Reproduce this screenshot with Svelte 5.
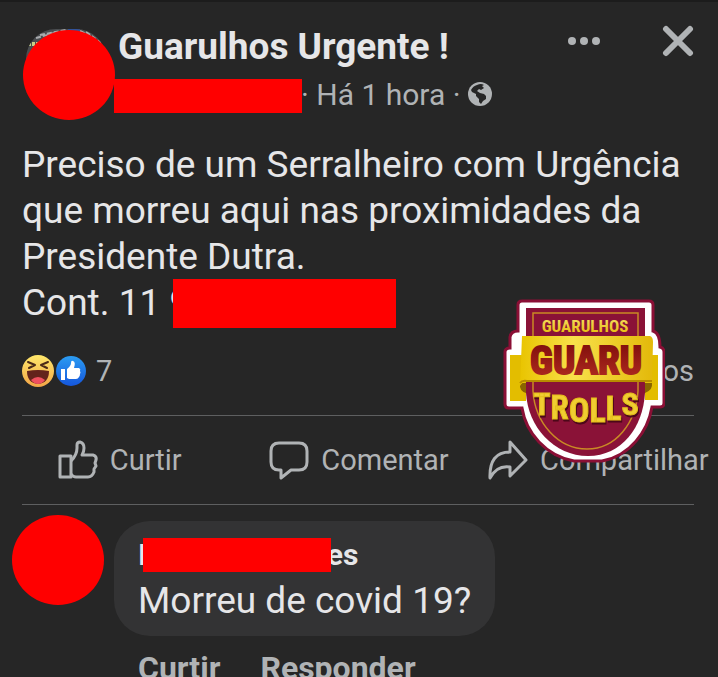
<script>
  const author = "Guarulhos Urgente !";
  const lines = [
    "Preciso de um Serralheiro com Urgência",
    "que morreu aqui nas proximidades da",
    "Presidente Dutra.",
  ];
</script>

<main class="page">
  <article class="post">
    <header class="header">
      <div class="avatar">
        <svg class="photo" width="80" height="80" viewBox="0 0 80 80" aria-hidden="true">
          <clipPath id="round"><rect width="80" height="80" rx="30" /></clipPath>
          <g clip-path="url(#round)">
            <rect width="80" height="80" fill="#4a4d50" />
            <path d="M10 9 L32 3 M14 6 L40 1 M54 2 L66 8 M60 3 L78 16" stroke="#a9abae" stroke-width="2" stroke-dasharray="5 2" />
            <path d="M2 15 H14" stroke="#c9cf86" stroke-width="4" stroke-dasharray="3 1" />
            <path d="M42 1 H54" stroke="#33539b" stroke-width="3" />
          </g>
        </svg>
        <span class="disc"></span>
      </div>
      <div class="heading">
        <h1>{author}</h1>
        <p class="meta">
          <span class="redacted meta-name"></span>
          <span>· Há 1 hora ·</span>
          <svg width="24" height="24" viewBox="0 0 24 24" role="img" aria-label="Público">
            <circle cx="12" cy="12" r="12" fill="#b0b3b5" />
            <path
              d="M9 3 Q13 1 16 3 L14 4 L16 6 L13 8 L11 7 L9 9 L12 11 L16 12 L18 14 L18 17 L15 19 L13 22 L11 20 L11 17 L8 14 L8 12 L4 10 L3 8 Q5 4 9 3 Z"
              fill="#262626"
            />
          </svg>
        </p>
      </div>
      <div class="tools">
        <button aria-label="Mais opções">
          <svg width="32" height="32" viewBox="0 0 32 32" fill="#b0b3b5">
            <circle cx="4" cy="16" r="4" />
            <circle cx="16" cy="16" r="4" />
            <circle cx="28" cy="16" r="4" />
          </svg>
        </button>
        <button aria-label="Fechar">
          <svg width="32" height="32" viewBox="0 0 32 32" stroke="#b0b3b5" stroke-width="6" stroke-linecap="round">
            <path d="M4 4 L28 28 M28 4 L4 28" />
          </svg>
        </button>
      </div>
    </header>

    <div class="body">
      {#each lines as line}
        <p>{line}</p>
      {/each}
      <p class="contact">Cont. 11 9<span class="redacted phone"></span></p>
    </div>

    <div class="counts">
      <svg width="32" height="32" viewBox="0 0 32 32" aria-hidden="true">
        <defs>
          <linearGradient id="haha" x1="0" y1="0" x2="0" y2="1">
            <stop offset="0" stop-color="#ffe86b" />
            <stop offset="1" stop-color="#f3a547" />
          </linearGradient>
        </defs>
        <circle cx="16" cy="16" r="16" fill="url(#haha)" />
        <path d="M6 7 L13 10 L7 13 M26 7 L19 10 L25 13" fill="none" stroke="#4c2b18" stroke-width="2" stroke-linecap="round" stroke-linejoin="round" />
        <path d="M5 16 Q16 14 27 16 Q27 28 16 29 Q5 28 5 16 Z" fill="#63231c" />
        <path d="M9 25 Q16 19 23 25 Q20 29 16 29 Q12 29 9 25 Z" fill="#f0505f" />
      </svg>
      <svg width="32" height="32" viewBox="0 0 32 32" aria-hidden="true">
        <defs>
          <linearGradient id="like" x1="0" y1="0" x2="0" y2="1">
            <stop offset="0" stop-color="#2b9cf2" />
            <stop offset="1" stop-color="#1556dc" />
          </linearGradient>
        </defs>
        <circle cx="15" cy="16" r="15" fill="url(#like)" />
        <path d="M5 14 H9 V25 H5 Z" fill="#fff" />
        <path d="M11 14 Q15 11 15 8 Q15 5 17 6 Q20 7 18 13 H23 Q25 14 24 16 Q25 18 24 19 Q24 21 23 22 Q22 24 20 24 H13 L11 23 Z" fill="#fff" />
      </svg>
      <span class="total">7</span>
      <span class="comments">comentários</span>
    </div>

    <nav class="actions">
      <button>
        <svg width="40" height="40" viewBox="0 0 40 40" class="outline">
          <path d="M2 16 H13 V37 H2 Z" />
          <path d="M13 21 Q19 15 19 8 V5 Q19 2 22 2 Q26 3 26 8 Q26 12 24 15 H35 Q39 16 38 20 L37 23 L38 26 L36 29 L36 32 Q34 37 30 37 H18 Q15 37 13 34" />
        </svg>
        Curtir
      </button>
      <button>
        <svg width="40" height="40" viewBox="0 0 40 40" class="outline">
          <path d="M10 3 H30 Q38 3 38 11 V22 Q38 30 30 30 H22 L12 38 V30 H10 Q2 30 2 22 V11 Q2 3 10 3 Z" />
        </svg>
        Comentar
      </button>
      <button>
        <svg width="40" height="40" viewBox="0 0 40 40" class="outline">
          <path d="M22 2 L38 20 L22 36 V27 Q9 25 2 38 Q1 12 22 12 Z" />
        </svg>
        Compartilhar
      </button>
    </nav>

    <svg class="sticker" width="162" height="166" viewBox="-1 -1 162 166" role="img" aria-label="Guarulhos Guaru Trolls">
      <defs>
        <linearGradient id="gold" x1="0" y1="0" x2="0" y2="1">
          <stop offset="0" stop-color="#f7e36a" />
          <stop offset="1" stop-color="#e5b700" />
        </linearGradient>
        <linearGradient id="ribbon" x1="0" y1="0" x2="1" y2="0">
          <stop offset="0" stop-color="#e9c400" />
          <stop offset="0.4" stop-color="#f8e04a" />
          <stop offset="1" stop-color="#e3b90a" />
        </linearGradient>
        <linearGradient id="red" x1="0" y1="0" x2="0" y2="1">
          <stop offset="0" stop-color="#7a0a0a" />
          <stop offset="1" stop-color="#b52f22" />
        </linearGradient>
      </defs>
      <path
        d="M18 2 H145 Q149 2 149 6 V32 Q156 34 156 48 Q160 49 160 53 V104 Q160 108 156 108 H148 C144 132 126 157 98 162 H70 C42 157 22 134 18 109 H5 Q1 109 1 105 V53 Q1 49 6 49 V38 Q7 32 14 32 V6 Q14 2 18 2 Z"
        fill="#fff"
        stroke="#8a0f35"
        stroke-width="3"
      />
      <path d="M22 9 H141 V94 C139 128 118 157 84 157 C50 157 24 128 22 94 Z" fill="#8a1237" />
      <path d="M29 14 H134 V92 C132 124 112 150 83 150 C54 150 31 124 29 92 Z" fill="none" stroke="#c98a25" stroke-width="1.5" />
      <path d="M6 56 H22 V102 H6 Z M141 56 H154 V101 H141 Z" fill="#e3bd00" />
      <path d="M16 84 Q15 92 22 94 V84 Z M148 84 Q149 91 141 94 V84 Z" fill="#8a6500" />
      <path d="M18 37 H146 Q149 38 149 43 L148 83 Q146 85 140 83 H22 Q18 83 16 87 Z" fill="url(#ribbon)" />
      <path d="M16 84 Q18 81 23 82 H148" fill="none" stroke="#b88b00" stroke-width="2" />
      <g class="letters">
        <text x="81" y="33" font-size="17" fill="url(#gold)">GUARULHOS</text>
        <text x="82" y="75" font-size="39" fill="url(#red)" stroke="url(#red)" stroke-width="2">GUARU</text>
        <text class="trolls" x="82" y="116" fill="#f0cd32" stroke="#e5bd1a">
          <tspan font-size="32">T</tspan><tspan font-size="33" dy="4">R</tspan><tspan font-size="34" dy="3">O</tspan><tspan font-size="34">L</tspan><tspan font-size="33" dy="-2">L</tspan><tspan font-size="32" dy="-5">S</tspan>
        </text>
      </g>
    </svg>
  </article>

  <section class="comment">
    <span class="disc"></span>
    <div class="thread">
      <div class="bubble">
        <p class="name">I<span class="redacted person"></span>es</p>
        <p class="text">Morreu de covid 19?</p>
      </div>
      <div class="replies">
        <button>Curtir</button>
        <button>Responder</button>
      </div>
    </div>
  </section>
</main>

<style>
  :global(body) {
    margin: 0;
    background: #262626;
  }

  .page {
    box-sizing: border-box;
    height: 100vh;
    overflow: hidden;
    border-top: 2px solid #1c1c1c;
    background: #262626;
    color: #e6e6e8;
    font-family: Roboto, "Liberation Sans", sans-serif;
  }

  h1,
  p {
    margin: 0;
  }

  button {
    border: 0;
    padding: 0;
    background: none;
    color: inherit;
    font: inherit;
    cursor: pointer;
  }

  svg {
    display: block;
    flex: none;
  }

  .redacted {
    display: inline-block;
    background: #ff0000;
  }

  .disc {
    display: block;
    flex: none;
    width: 92px;
    height: 90px;
    border-radius: 50%;
    background: #ff0000;
  }

  .post {
    position: relative;
  }

  .header {
    display: flex;
    align-items: flex-start;
    padding: 22px 24px 0 23px;
  }

  .avatar {
    position: relative;
    margin-top: 6px;
  }

  .avatar .disc {
    position: relative;
  }

  .photo {
    position: absolute;
    top: -1px;
    left: 3px;
  }

  .heading {
    flex: 1;
  }

  h1 {
    padding-left: 3px;
    font-size: 37px;
    font-weight: 700;
    line-height: 46px;
    white-space: nowrap;
  }

  .meta {
    display: flex;
    align-items: center;
    gap: 7px;
    height: 48px;
    color: #b0b3b5;
    font-size: 30px;
    white-space: nowrap;
  }

  .meta-name {
    width: 188px;
    height: 34px;
    margin: 4px -8px 0 -1px;
  }

  .tools {
    display: flex;
    gap: 62px;
    padding-top: 1px;
  }

  .body {
    padding: 22px 22px 0;
    font-size: 37px;
    line-height: 46px;
  }

  .contact {
    display: flex;
    align-items: center;
    height: 46px;
  }

  .phone {
    width: 223px;
    height: 49px;
    margin-left: -17px;
    z-index: 1;
  }

  .counts {
    display: flex;
    align-items: center;
    gap: 2px;
    height: 89px;
    margin: 0 24px 0 22px;
    border-bottom: 1px solid #5e5f60;
    color: #b0b3b5;
    font-size: 29px;
  }

  .total {
    padding-left: 6px;
  }

  .comments {
    margin-left: auto;
  }

  .actions {
    display: grid;
    grid-template-columns: repeat(3, 1fr);
    height: 88px;
    color: #b0b3b5;
    font-size: 29px;
  }

  .actions button {
    display: flex;
    align-items: center;
    justify-content: center;
    gap: 12px;
  }

  .outline {
    fill: none;
    stroke: #b0b3b5;
    stroke-width: 3;
    stroke-linejoin: round;
  }

  .sticker {
    position: absolute;
    right: 53px;
    bottom: 40px;
  }

  .letters {
    font-family: "Roboto Condensed", "Liberation Sans Narrow", Roboto, sans-serif;
    font-weight: 700;
    text-anchor: middle;
  }

  .trolls {
    filter: drop-shadow(1px 2px 0 #4c0719);
  }

  .comment {
    display: flex;
    gap: 10px;
    margin: 0 24px 0 22px;
    border-top: 1px solid #5e5f60;
  }

  .comment > .disc {
    margin: 10px 0 0 -10px;
  }

  .thread {
    padding-top: 16px;
  }

  .bubble {
    padding: 11px 24px 12px;
    border-radius: 36px;
    background: #333334;
    line-height: 46px;
  }

  .name {
    display: flex;
    align-items: center;
    font-size: 30px;
    font-weight: 700;
  }

  .person {
    width: 188px;
    height: 34px;
    margin: 0 -4px;
    z-index: 1;
  }

  .text {
    font-size: 37px;
  }

  .replies {
    display: flex;
    gap: 40px;
    padding: 12px 24px;
    color: #b0b3b5;
    font-size: 32px;
    font-weight: 700;
    line-height: 40px;
  }
</style>
